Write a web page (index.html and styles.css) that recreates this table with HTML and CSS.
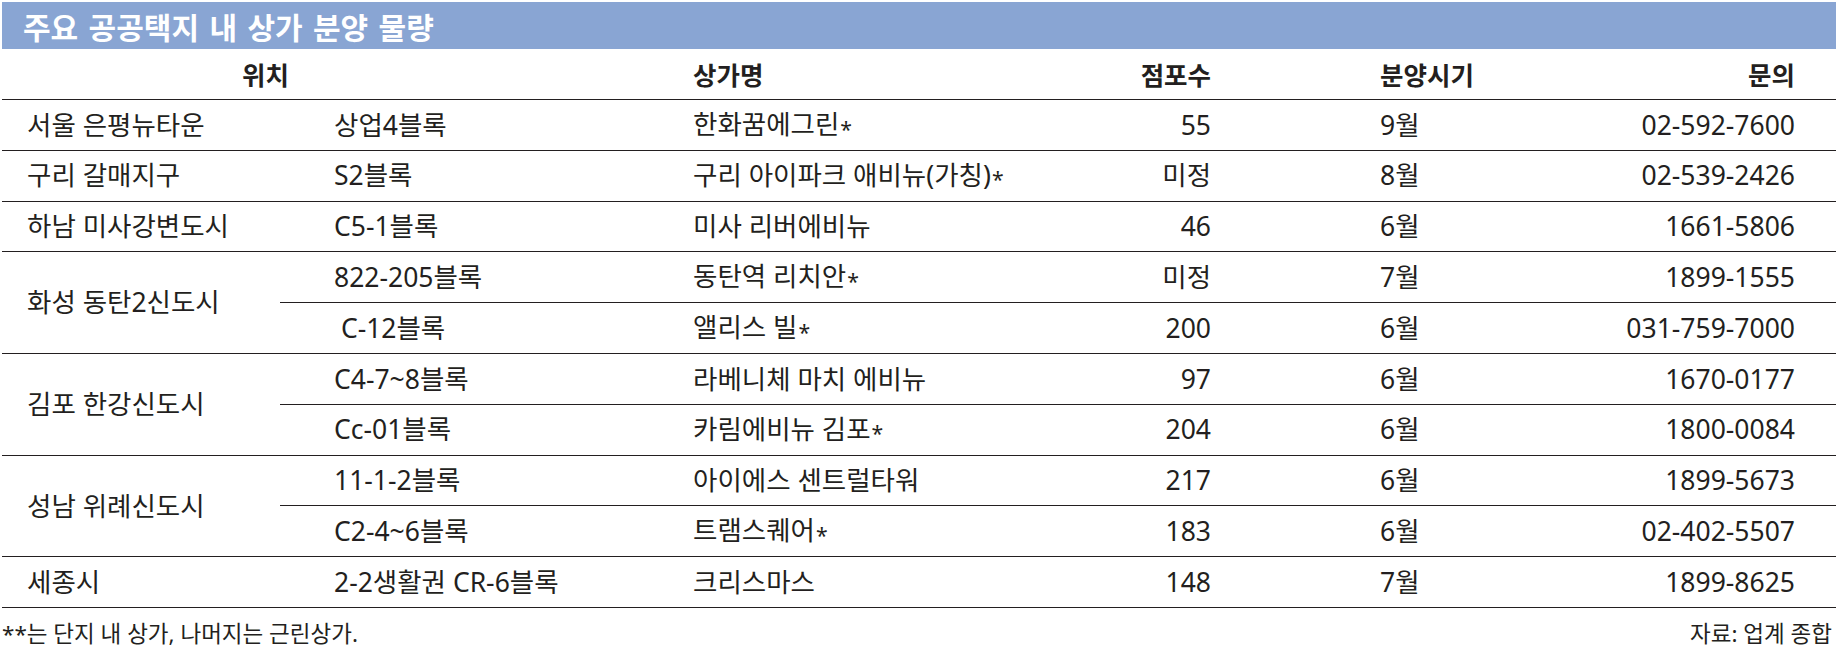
FILE: index.html
```html
<!DOCTYPE html>
<html lang="ko">
<head>
<meta charset="utf-8">
<title>주요 공공택지 내 상가 분양 물량</title>
<link rel="stylesheet" href="styles.css">
</head>
<body>
<div class="page">
  <div class="title-bar"><h1 class="title">주요 공공택지 내 상가 분양 물량</h1></div>
  <table class="grid">
    <colgroup>
      <col class="c1"><col class="c2"><col class="c3"><col class="c4"><col class="c5"><col class="c6">
    </colgroup>
    <thead>
      <tr>
        <th class="h-loc" colspan="2">위치</th>
        <th class="l">상가명</th>
        <th class="r">점포수</th>
        <th class="l month">분양시기</th>
        <th class="r phone">문의</th>
      </tr>
    </thead>
    <tbody>
      <tr>
        <td class="site">서울 은평뉴타운</td><td class="block">상업4블록</td><td class="name">한화꿈에그린<span class="star">*</span></td><td class="r">55</td><td class="month">9월</td><td class="r phone">02-592-7600</td>
      </tr>
      <tr>
        <td class="site">구리 갈매지구</td><td class="block">S2블록</td><td class="name">구리 아이파크 애비뉴(가칭)<span class="star">*</span></td><td class="r">미정</td><td class="month">8월</td><td class="r phone">02-539-2426</td>
      </tr>
      <tr>
        <td class="site">하남 미사강변도시</td><td class="block">C5-1블록</td><td class="name">미사 리버에비뉴</td><td class="r">46</td><td class="month">6월</td><td class="r phone">1661-5806</td>
      </tr>
      <tr>
        <td class="site" rowspan="2">화성 동탄2신도시</td><td class="block">822-205블록</td><td class="name">동탄역 리치안<span class="star">*</span></td><td class="r">미정</td><td class="month">7월</td><td class="r phone">1899-1555</td>
      </tr>
      <tr>
        <td class="block">&nbsp;C-12블록</td><td class="name">앨리스 빌<span class="star">*</span></td><td class="r">200</td><td class="month">6월</td><td class="r phone">031-759-7000</td>
      </tr>
      <tr>
        <td class="site" rowspan="2">김포 한강신도시</td><td class="block">C4-7~8블록</td><td class="name">라베니체 마치 에비뉴</td><td class="r">97</td><td class="month">6월</td><td class="r phone">1670-0177</td>
      </tr>
      <tr>
        <td class="block">Cc-01블록</td><td class="name">카림에비뉴 김포<span class="star">*</span></td><td class="r">204</td><td class="month">6월</td><td class="r phone">1800-0084</td>
      </tr>
      <tr>
        <td class="site" rowspan="2">성남 위례신도시</td><td class="block">11-1-2블록</td><td class="name">아이에스 센트럴타워</td><td class="r">217</td><td class="month">6월</td><td class="r phone">1899-5673</td>
      </tr>
      <tr>
        <td class="block">C2-4~6블록</td><td class="name">트램스퀘어<span class="star">*</span></td><td class="r">183</td><td class="month">6월</td><td class="r phone">02-402-5507</td>
      </tr>
      <tr>
        <td class="site">세종시</td><td class="block">2-2생활권 CR-6블록</td><td class="name">크리스마스</td><td class="r">148</td><td class="month">7월</td><td class="r phone">1899-8625</td>
      </tr>
    </tbody>
  </table>
  <div class="footer">
    <span class="note">**는 단지 내 상가, 나머지는 근린상가.</span>
    <span class="source">자료: 업계 종합</span>
  </div>
</div>
</body>
</html>
```
FILE: styles.css
```css
html, body {
  margin: 0;
  padding: 0;
  background: #ffffff;
}
body {
  width: 1836px;
  height: 658px;
  overflow: hidden;
  font-family: "Noto Sans", "Noto Sans CJK KR", sans-serif;
  color: #231f20;
}
.page {
  padding: 2px 0 0 2px;
}
.title-bar {
  height: 47px;
  background: #89a5d3;
  display: flex;
  align-items: center;
  padding-left: 21px;
}
.title {
  margin: 0;
  font-family: "Noto Sans CJK KR", sans-serif;
  font-weight: 700;
  font-size: 30px;
  line-height: 1;
  color: #ffffff;
  word-spacing: 2px;
}
.grid {
  width: 1834px;
  table-layout: fixed;
  border-collapse: separate;
  border-spacing: 0;
  font-size: 26.5px;
  line-height: 1;
}
.c1 { width: 278px; }
.c2 { width: 380px; }
.c3 { width: 440px; }
.c4 { width: 111px; }
.c5 { width: 400px; }
.c6 { width: 225px; }
th, td {
  padding: 0;
  vertical-align: middle;
  white-space: nowrap;
  border-bottom: 1px solid #231f20;
  text-align: left;
}
th {
  height: 50px;
  font-weight: 700;
  font-family: "Noto Sans CJK KR", sans-serif;
  font-size: 25.5px;
}
td {
  height: 49.8px;
  font-weight: 400;
}
.star {
  font-size: 0.8em;
  vertical-align: -0.12em;
  padding-left: 1px;
}
.h-loc { padding-left: 240px; }
.site { padding-left: 25px; }
.block { padding-left: 54px; }
.name { padding-left: 33px; }
.l { padding-left: 33px; }
.r { text-align: right; }
.month { padding-left: 169px; }
.phone { padding-right: 41px; }
.footer {
  height: 48px;
  display: flex;
  justify-content: space-between;
  align-items: center;
  font-size: 22.5px;
  line-height: 1;
  padding-top: 2px;
}
.source { padding-right: 4px; }
```
